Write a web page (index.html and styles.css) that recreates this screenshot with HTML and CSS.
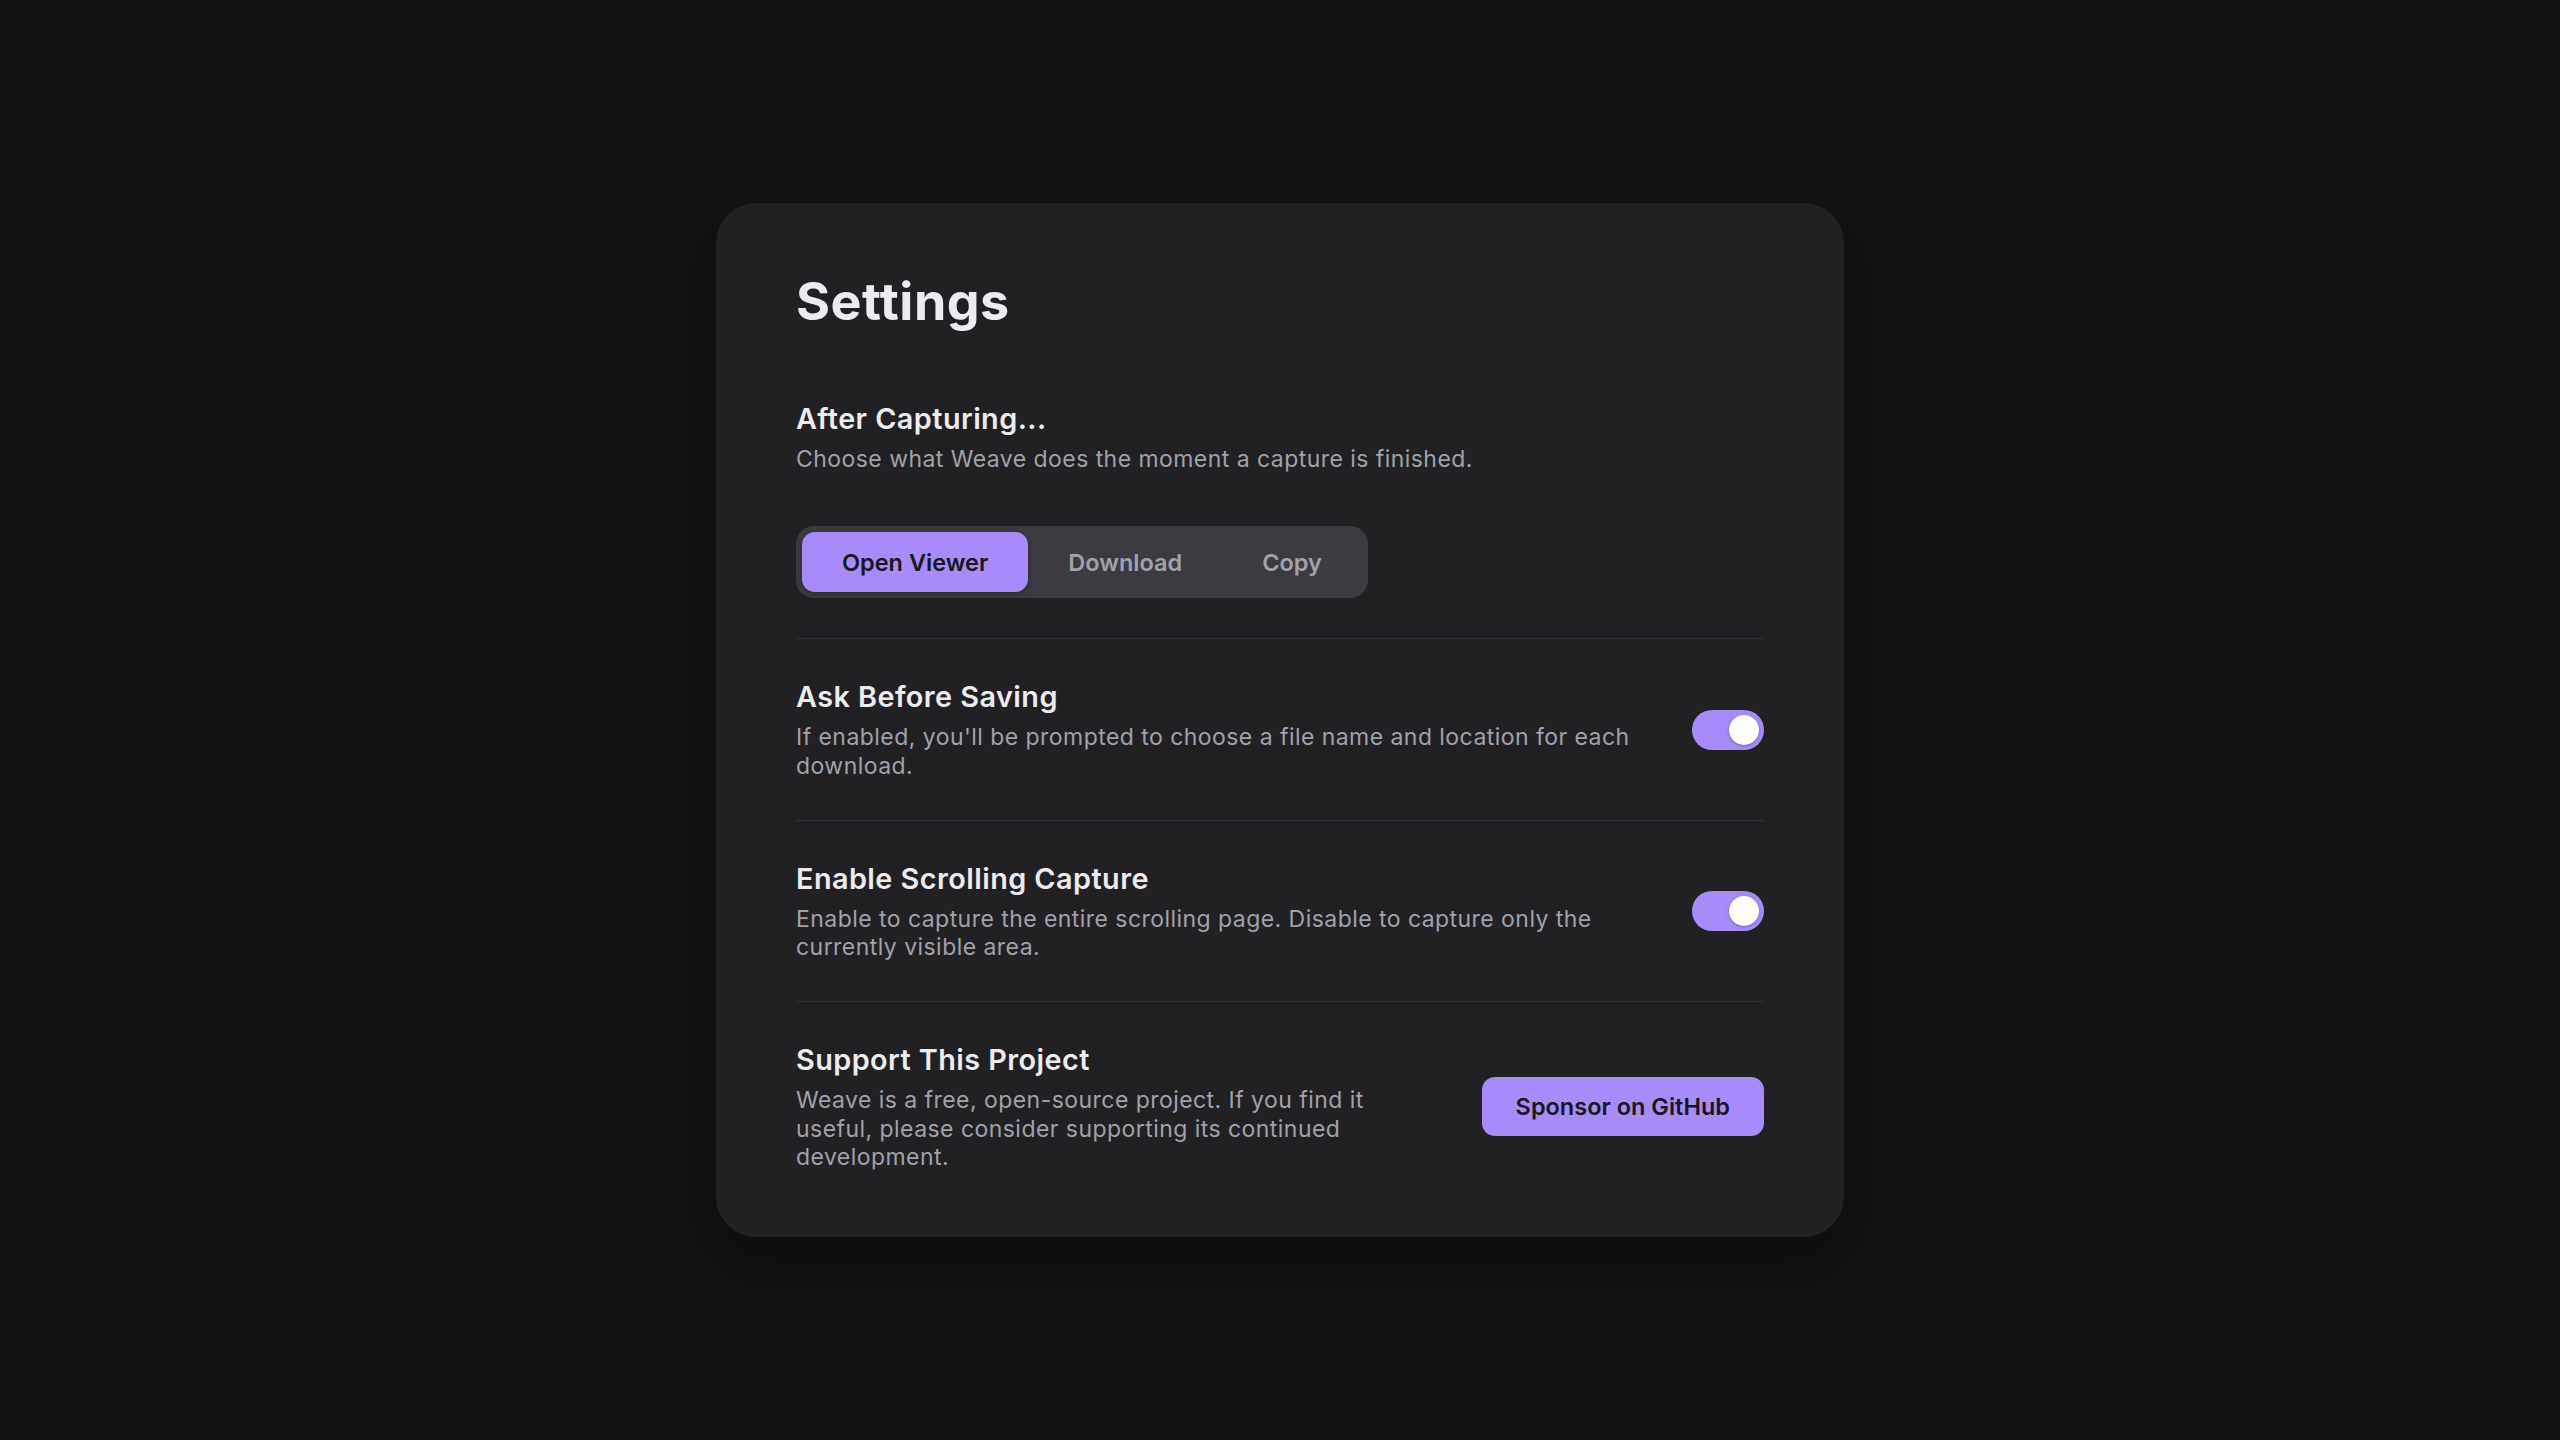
FILE: index.html
```html
<!DOCTYPE html>
<html lang="en">
<head>
<meta charset="utf-8">
<title>Settings</title>
<link rel="stylesheet" href="styles.css">
</head>
<body>
<main class="card">
  <h1 class="page-title">Settings</h1>

  <section class="section section-first">
    <h2 class="item-title">After Capturing...</h2>
    <p class="item-desc">Choose what Weave does the moment a capture is finished.</p>
    <div class="segmented">
      <button class="seg-btn seg-active">Open Viewer</button>
      <button class="seg-btn">Download</button>
      <button class="seg-btn">Copy</button>
    </div>
  </section>

  <section class="section row">
    <div class="row-text">
      <h2 class="item-title">Ask Before Saving</h2>
      <p class="item-desc">If enabled, you'll be prompted to choose a file name and location for each download.</p>
    </div>
    <span class="toggle"><span class="knob"></span></span>
  </section>

  <section class="section row">
    <div class="row-text">
      <h2 class="item-title">Enable Scrolling Capture</h2>
      <p class="item-desc">Enable to capture the entire scrolling page. Disable to capture only the currently visible area.</p>
    </div>
    <span class="toggle"><span class="knob"></span></span>
  </section>

  <section class="section row section-last">
    <div class="row-text row-text-narrow">
      <h2 class="item-title">Support This Project</h2>
      <p class="item-desc">Weave is a free, open-source project. If you find it useful, please consider supporting its continued development.</p>
    </div>
    <button class="sponsor-btn">Sponsor on GitHub</button>
  </section>
</main>
</body>
</html>
```

FILE: styles.css
```css
* {
  box-sizing: border-box;
}

html, body {
  margin: 0;
  padding: 0;
}

body {
  min-height: 100vh;
  background: #121214;
  font-family: Inter, "Noto Sans", "Liberation Sans", sans-serif;
  display: flex;
  align-items: center;
  justify-content: center;
  color: #ececf0;
}

.card {
  width: 1128px;
  background: #212124;
  border-radius: 40px;
  padding: 68px 80px 66px;
  box-shadow: 0 24px 60px rgba(0, 0, 0, 0.35);
}

.page-title {
  margin: 0 0 68px;
  font-size: 52px;
  line-height: 1.2;
  font-weight: 700;
  color: #ececf0;
  letter-spacing: 0.5px;
}

.section {
  padding: 40px 0;
  border-bottom: 1px solid #333338;
}

.section-first {
  padding-top: 0;
}

.section-last {
  padding-bottom: 0;
  border-bottom: none;
}

.row {
  display: flex;
  align-items: center;
  gap: 48px;
}

.row-text {
  flex: 1;
  min-width: 0;
}

.row-text-narrow {
  max-width: 600px;
}

.item-title {
  margin: 0 0 8px;
  font-size: 28.8px;
  line-height: 36px;
  font-weight: 600;
  color: #ececf0;
  letter-spacing: 0.45px;
}

.item-desc {
  margin: 0;
  font-size: 23px;
  line-height: 28.3px;
  font-weight: 400;
  color: #a1a1aa;
  letter-spacing: 0.45px;
}

.segmented {
  margin-top: 53px;
  display: inline-flex;
  padding: 6px;
  background: #3b3b40;
  border-radius: 18px;
}

.seg-btn {
  height: 60px;
  padding: 0 40px;
  border: none;
  background: transparent;
  border-radius: 13px;
  font-family: inherit;
  font-size: 23.5px;
  font-weight: 600;
  color: #a1a1aa;
  cursor: pointer;
}

.seg-active {
  background: #a78bfa;
  color: #18181b;
  box-shadow: 0 2px 6px rgba(0, 0, 0, 0.25);
}

.toggle {
  flex: none;
  width: 72px;
  height: 40px;
  border-radius: 20px;
  background: #a78bfa;
  display: flex;
  align-items: center;
  justify-content: flex-end;
  padding: 0 5px;
}

.knob {
  width: 30px;
  height: 30px;
  border-radius: 50%;
  background: #ffffff;
  box-shadow: 0 1px 3px rgba(0, 0, 0, 0.3);
}

.sponsor-btn {
  flex: none;
  margin-left: auto;
  height: 59px;
  padding: 0 34px;
  border: none;
  border-radius: 13px;
  background: #a78bfa;
  color: #18181b;
  font-family: inherit;
  font-size: 23.5px;
  font-weight: 600;
  cursor: pointer;
}
```
